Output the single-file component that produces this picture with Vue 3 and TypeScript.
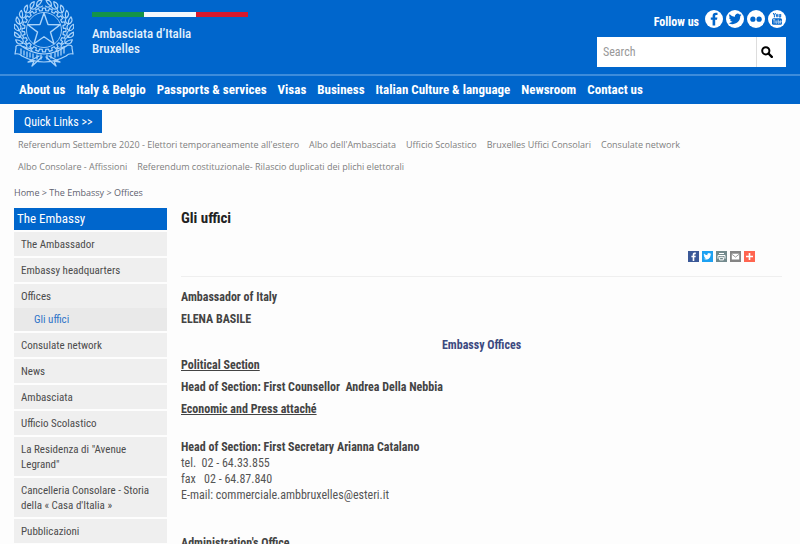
<script setup lang="ts">
interface SideLink {
  label: string
  children?: string[]
}

const navLinks: string[] = [
  'About us', 'Italy & Belgio', 'Passports & services', 'Visas', 'Business',
  'Italian Culture & language', 'Newsroom', 'Contact us',
]

const quickRows: string[][] = [
  [
    "Referendum Settembre 2020 - Elettori temporaneamente all'estero",
    "Albo dell'Ambasciata", 'Ufficio Scolastico', 'Bruxelles Uffici Consolari', 'Consulate network',
  ],
  ['Albo Consolare - Affissioni', 'Referendum costituzionale- Rilascio duplicati dei plichi elettorali'],
]

const sideLinks: SideLink[] = [
  { label: 'The Ambassador' },
  { label: 'Embassy headquarters' },
  { label: 'Offices', children: ['Gli uffici'] },
  { label: 'Consulate network' },
  { label: 'News' },
  { label: 'Ambasciata' },
  { label: 'Ufficio Scolastico' },
  { label: 'La Residenza di "Avenue Legrand"' },
  { label: "Cancelleria Consolare - Storia della « Casa d'Italia »" },
  { label: 'Pubblicazioni' },
]

// Emblem geometry, centred on the middle of the star.
const polar = (r: number, deg: number): string => {
  const a = (deg * Math.PI) / 180
  return `${(r * Math.sin(a)).toFixed(2)} ${(-r * Math.cos(a)).toFixed(2)}`
}

const star = (outer: number, inner: number): string =>
  'M' + Array.from({ length: 10 }, (_, i) => polar(i % 2 ? inner : outer, i * 36)).join('L') + 'Z'

const gear: string = 'M' + Array.from({ length: 20 }, (_, i) => {
  const a = i * 18
  return [polar(19.5, a - 5), polar(22, a - 4), polar(22, a + 4), polar(19.5, a + 5)].join('L')
}).join('L') + 'Z'

const leaves: string = [-1, 1].flatMap(side =>
  Array.from({ length: 10 }, (_, i) => {
    const a = side * (152 - i * 15)
    const tipOut = polar(30, a - side * 13)
    const tipIn = polar(24, a - side * 13)
    return `M${polar(25, a)}Q${polar(31, a - side * 2)} ${tipOut}Q${polar(26, a - side * 10)} ${polar(25, a)}`
      + `M${polar(25, a)}Q${polar(22, a - side * 7)} ${tipIn}`
  }),
).join('')
</script>

<template>
  <div class="page">
    <header class="site-header">
      <div class="masthead">
        <a class="brand" href="#">
          <svg class="emblem" viewBox="-30 -32 60 70" aria-hidden="true">
            <g fill="none" stroke="#a9d3fa" stroke-linejoin="round" stroke-linecap="round">
              <path :d="leaves" stroke-width="1.2" />
              <path :d="gear" stroke-width="1.2" />
              <circle r="17.500" stroke-width="0.9" />
              <path :d="star(17, 6.8)" stroke-width="1.4" />
              <path d="M-28 18Q-29 15-24 15Q-12 24 0 24Q12 24 24 15Q29 15 28 18L29 24Q25 23 22 26Q11 32 0 32Q-11 32-22 26Q-25 23-29 24Z" fill="#0066cc" stroke-width="1.2" />
              <path d="M-23 19v5m3-3v4m3-3v5m3-4v4m3-3v4m4-3v4m4-4v4m6-4v4m4-5v4m4-5v4m3-6v5m3-6v5m3-7v5" stroke-width="1.3" />
              <path d="M-2 27L-12 36L-10 31L-16 32L-5 26M2 27L12 36L10 31L16 32L5 26" stroke-width="1.3" />
            </g>
          </svg>
          <span class="brand-text">
            <span class="tricolore"><i class="green"></i><i class="white"></i><i class="red"></i></span>
            <span>Ambasciata d’Italia</span>
            <span>Bruxelles</span>
          </span>
        </a>
        <div class="tools">
          <div class="follow">
            <span>Follow us</span>
            <a href="#" aria-label="Facebook">
              <svg class="social" viewBox="0 0 18 18"><circle cx="9" cy="9" r="9" fill="#fff" /><path d="M7.6 15.5V9.8H5.8V7.4h1.8V6c0-2.2 1.2-3.3 3.2-3.3h1.7v2.4h-1.2c-.9 0-1.1.4-1.1 1.1v1.2h2.2L12 9.800h-1.800v5.700z" fill="#0066cc" /></svg>
            </a>
            <a href="#" aria-label="Twitter">
              <svg class="social" viewBox="0 0 18 18"><circle cx="9" cy="9" r="9" fill="#fff" /><path transform="translate(2.600 2.400) scale(.54)" d="M23.950 4.570a10 10 0 01-2.820.77 4.960 4.960 0 002.160-2.720c-.95.55-2 .95-3.130 1.180a4.920 4.920 0 00-8.380 4.480C7.690 8.100 4.070 6.130 1.640 3.160a4.920 4.920 0 001.520 6.570 4.900 4.900 0 01-2.230-.61v.06c0 2.380 1.700 4.370 3.950 4.830a5 5 0 01-2.210.080 4.940 4.940 0 004.600 3.420A9.870 9.870 0 010 19.540a14 14 0 007.550 2.210c9.050 0 14-7.500 14-13.980l-.02-.64a9.900 9.900 0 002.420-2.560z" fill="#0066cc" /></svg>
            </a>
            <a href="#" aria-label="Flickr">
              <svg class="social" viewBox="0 0 18 18"><circle cx="9" cy="9" r="9" fill="#fff" /><circle cx="5.900" cy="9.200" r="2.600" fill="#0066cc" /><circle cx="12.100" cy="9.200" r="2.600" fill="#0066cc" /></svg>
            </a>
            <a href="#" aria-label="YouTube">
              <svg class="social" viewBox="0 0 18 18"><circle cx="9" cy="9" r="9" fill="#fff" /><g fill="none" stroke="#0066cc"><path d="M5.200 3l1.200 2.300L7.500 3M6.400 5.300V7.300M11.200 4v3h1.500V4" /><rect x="8.400" y="4.200" width="1.300" height="2.700" rx=".6" /></g><rect x="4" y="8.200" width="10" height="6.600" rx="1.500" fill="#0066cc" /><path d="M5 9.700h2.200M6.100 9.700v3.800M7.800 10.500v2.700h1.100v-2.700M10.200 9.300v4h1v-2.200h-1M13.300 13.100h-1.100v-2.300h1v1.300h-1" fill="none" stroke="#fff" stroke-width=".6" /></svg>
            </a>
          </div>
          <form class="search" @submit.prevent>
            <input type="search" placeholder="Search" aria-label="Search">
            <button type="submit" aria-label="Submit search">
              <svg viewBox="0 0 12 12"><circle cx="4.800" cy="4.800" r="3.600" fill="none" stroke="#000" stroke-width="2" /><path d="M7.500 7.500l3.300 3.300" stroke="#000" stroke-width="2.400" stroke-linecap="round" /></svg>
            </button>
          </form>
        </div>
      </div>
      <nav class="main-nav" aria-label="Main">
        <a v-for="link in navLinks" :key="link" href="#">{{ link }}</a>
      </nav>
    </header>

    <section class="quick">
      <button type="button" class="quick-toggle">Quick Links &gt;&gt;</button>
      <div v-for="(row, i) in quickRows" :key="i" class="quick-row">
        <a v-for="link in row" :key="link" href="#">{{ link }}</a>
      </div>
    </section>

    <nav class="breadcrumb" aria-label="Breadcrumb">
      <a href="#">Home</a> &gt; <a href="#">The Embassy</a> &gt; <a href="#">Offices</a>
    </nav>

    <div class="columns">
      <aside class="sidebar">
        <h2>The Embassy</h2>
        <ul>
          <li v-for="item in sideLinks" :key="item.label">
            <a class="item" href="#">{{ item.label }}</a>
            <a v-for="child in item.children" :key="child" class="child" href="#">{{ child }}</a>
          </li>
        </ul>
      </aside>

      <main class="content">
        <h1>Gli uffici</h1>
        <div class="share">
          <a href="#" aria-label="Share on Facebook"><svg viewBox="0 0 11 11"><path fill="#3b5998" d="M0 0h11v11H0z" /><path d="M4.700 10V6.300H3.400V4.700h1.300v-1c0-1.400.8-2.100 2-2.100h1.100v1.600H7c-.5 0-.7.200-.7.700v.8h1.500l-.2 1.600H6.300V10z" fill="#fff" /></svg></a>
          <a href="#" aria-label="Share on Twitter"><svg viewBox="0 0 11 11"><path fill="#1da1f2" d="M0 0h11v11H0z" /><path transform="translate(1.500 1.400) scale(.33)" d="M23.950 4.570a10 10 0 01-2.820.77 4.960 4.960 0 002.160-2.720c-.95.55-2 .95-3.130 1.180a4.920 4.920 0 00-8.380 4.480C7.690 8.100 4.070 6.130 1.640 3.160a4.920 4.920 0 001.520 6.570 4.900 4.900 0 01-2.230-.61v.06c0 2.380 1.700 4.370 3.950 4.830a5 5 0 01-2.210.080 4.940 4.940 0 004.600 3.420A9.870 9.870 0 010 19.540a14 14 0 007.550 2.210c9.050 0 14-7.500 14-13.980l-.02-.64a9.900 9.900 0 002.420-2.560z" fill="#fff" /></svg></a>
          <a href="#" aria-label="Print"><svg viewBox="0 0 11 11"><path fill="#738a8d" d="M0 0h11v11H0z" /><path d="M3 2.500h5M2 4.500h7v3.200M2 4.500v3.200M3.600 6.300h3.800v2.600H3.600z" fill="none" stroke="#fff" /></svg></a>
          <a href="#" aria-label="Send by email"><svg viewBox="0 0 11 11"><path fill="#848484" d="M0 0h11v11H0z" /><path d="M1.800 2.700h7.400v5.800H1.800z" fill="#fff" /><path d="M1.800 3.200l3.700 2.900 3.700-2.900" fill="none" stroke="#848484" stroke-width=".8" /></svg></a>
          <a href="#" aria-label="More"><svg viewBox="0 0 11 11"><path fill="#ff6550" d="M0 0h11v11H0z" /><path d="M5.500 2v7M2 5.500h7" stroke="#fff" stroke-width="1.600" /></svg></a>
        </div>
        <hr>
        <p><strong>Ambassador of Italy</strong></p>
        <p><strong>ELENA BASILE</strong></p>
        <h3>Embassy Offices</h3>
        <p><strong class="section">Political Section</strong></p>
        <p><strong>Head of Section: First Counsellor&nbsp; Andrea Della Nebbia</strong></p>
        <p><strong class="section">Economic and Press attaché</strong></p>
        <p class="office">
          <strong>Head of Section: First Secretary Arianna Catalano</strong><br>
          tel.&nbsp; 02 - 64.33.855<br>
          fax&nbsp;&nbsp; 02 - 64.87.840<br>
          E-mail: <a href="mailto:commerciale.ambbruxelles@esteri.it">commerciale.ambbruxelles@esteri.it</a>
        </p>
        <p class="office"><strong>Administration's Office</strong></p>
      </main>
    </div>
  </div>
</template>

<style>
body {
  background: #fdfdfd;
}
</style>

<style scoped>
.page {
  font: 12px/16px "Roboto Condensed", Roboto, sans-serif;
  color: #555;
}

a {
  color: inherit;
  text-decoration: none;
}

.site-header {
  background: #0066cc;
  color: #fff;
}

.masthead {
  display: flex;
  justify-content: space-between;
  box-sizing: border-box;
  height: 76px;
  padding: 0 14px;
  border-bottom: 2px solid #3d8cdb;
}

.brand {
  display: flex;
  gap: 18px;
  color: #e4f1fd;
  font-size: 13px;
  font-weight: 500;
  line-height: 15px;
}

.emblem {
  width: 60px;
  height: 70px;
  margin-top: -2px;
}

.brand-text {
  display: flex;
  flex-direction: column;
  padding-top: 12px;
}

.tricolore {
  display: flex;
  height: 5px;
  margin-bottom: 9px;
}

.tricolore i {
  width: 52px;
}

.green {
  background: #149349;
}

.white {
  background: #f4f8fc;
}

.red {
  background: #d7192d;
}

.tools {
  display: flex;
  flex-direction: column;
  gap: 3px;
  width: 189px;
  padding-top: 10px;
}

.follow {
  display: flex;
  justify-content: flex-end;
  gap: 3px;
  line-height: 24px;
  font-weight: 700;
}

.follow span {
  margin-right: 3px;
}

.social {
  display: block;
  width: 18px;
  height: 18px;
}

.search {
  display: flex;
  height: 30px;
  background: #fff;
}

.search input {
  flex: 1;
  min-width: 0;
  padding: 0 6px;
  border: 0;
  border-right: 1px solid #ddd;
  background: transparent;
  color: #555;
  font: inherit;
}

.search input::placeholder {
  color: #999;
  opacity: 1;
}

.search button {
  width: 29px;
  padding: 0 4px;
  border: 0;
  background: transparent;
  text-align: left;
}

.search button svg {
  display: block;
  width: 12px;
  height: 12px;
}

.main-nav {
  display: flex;
  gap: 11px;
  padding: 0 19px;
  font-size: 13px;
  font-weight: 700;
  line-height: 28px;
}

.quick {
  padding: 6px 14px 0;
}

.quick-toggle {
  display: block;
  height: 23px;
  margin-bottom: 1px;
  padding: 0 10px;
  border: 0;
  background: #0066cc;
  color: #fff;
  font: inherit;
}

.quick-row {
  display: flex;
  gap: 10px;
  padding: 0 4px;
  color: #808080;
  font-family: "Open Sans", sans-serif;
  font-size: 9px;
  line-height: 22px;
}

.breadcrumb {
  padding: 7px 14px;
  color: #5f6270;
  font-family: "Open Sans", sans-serif;
  font-size: 9px;
}

.columns {
  display: flex;
  gap: 14px;
  padding: 0 18px 0 14px;
}

.sidebar {
  flex: none;
  width: 153px;
}

.sidebar h2 {
  margin: 0 0 2px;
  padding: 0 3px;
  background: #0066cc;
  color: #fff;
  font-size: 13px;
  font-weight: 400;
  line-height: 22px;
}

.sidebar ul {
  display: flex;
  flex-direction: column;
  gap: 2px;
  margin: 0;
  padding: 0;
  list-style: none;
}

.sidebar a {
  display: block;
  padding: 5px 7px 4px;
  background: #efefef;
  color: #4c4c4c;
  font-size: 11px;
  line-height: 15px;
}

.sidebar .child {
  padding: 4px 20px;
  background: #e9e9e9;
  color: #2f74c8;
}

.content {
  flex: 1;
  min-width: 0;
}

.content h1 {
  margin: 0;
  color: #222;
  font-size: 15px;
  line-height: 20px;
}

.share {
  display: flex;
  justify-content: flex-end;
  gap: 3px;
  padding: 23px 27px 14px;
}

.share svg {
  display: block;
  width: 11px;
  height: 11px;
}

.content hr {
  margin: 0 0 12px;
  border: 0;
  border-top: 1px solid #efefef;
}

.content p {
  margin: 0 0 6px;
}

.content strong {
  color: #444;
}

.content h3 {
  margin: 10px 0 4px;
  color: #3c4a80;
  font-size: 12px;
  text-align: center;
}

.section {
  text-decoration: underline;
}

.content .office {
  margin: 22px 0 32px;
}
</style>
